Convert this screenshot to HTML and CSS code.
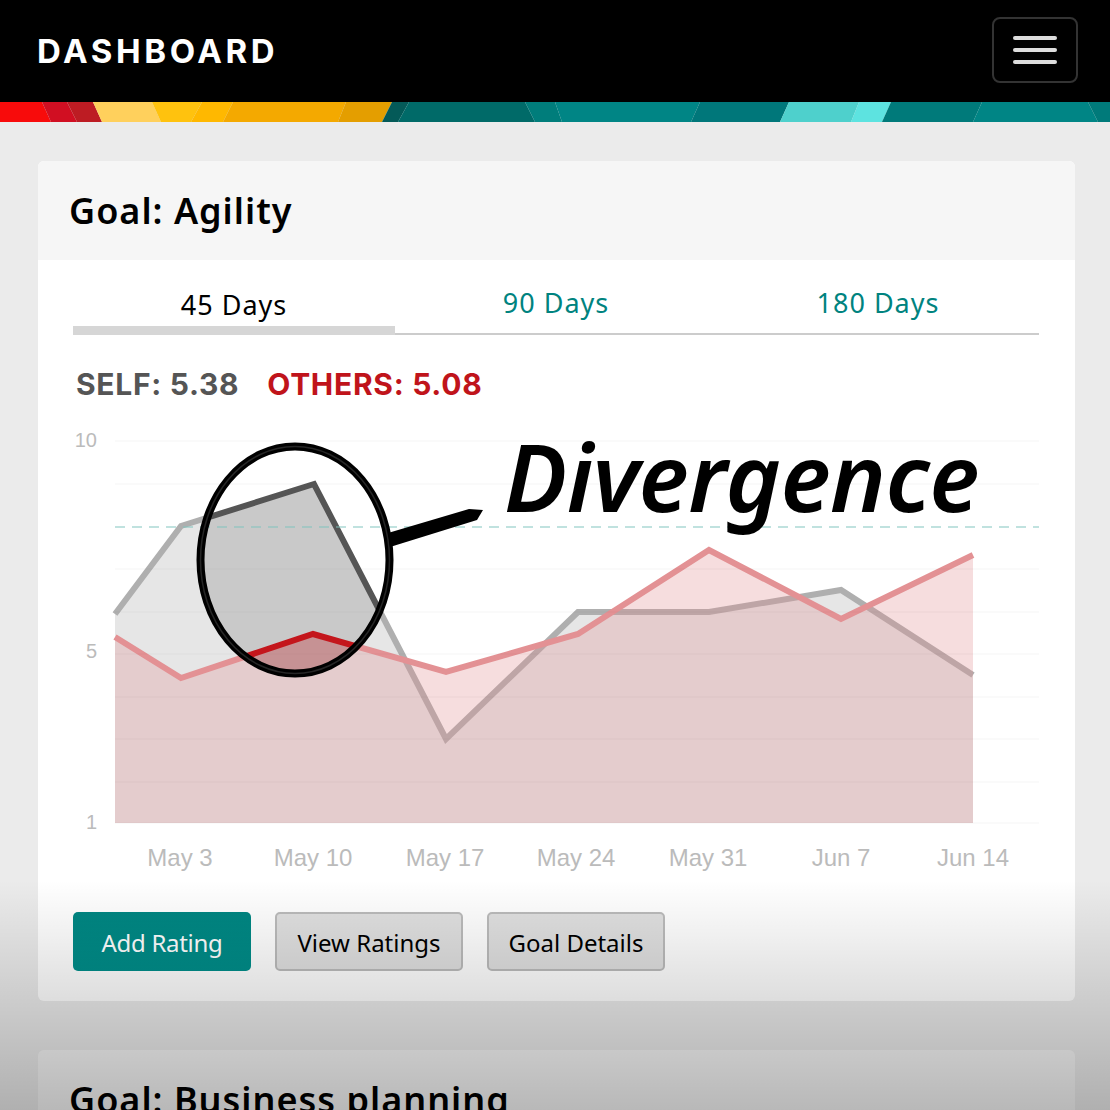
FILE: index.html
```html
<!DOCTYPE html>
<html lang="en">
  <head>
    <title>Dashboard</title>
    <link rel="stylesheet" href="styles.css">
  </head>
  <body>
    <nav class="topbar">
      <a class="brand">DASHBOARD</a>
      <button class="menu-toggle" aria-label="Menu">
        <span></span>
        <span></span>
        <span></span>
      </button>
    </nav>

    <svg class="stripe" viewBox="0 0 1110 20" preserveAspectRatio="none" aria-hidden="true">
      <polygon fill="#f80b0b" points="0,0 42,0 51,20 0,20"/>
      <polygon fill="#d10f22" points="42,0 67,0 77,20 51,20"/>
      <polygon fill="#bd1c23" points="67,0 93,0 102,20 77,20"/>
      <polygon fill="#ffd05c" points="93,0 152,0 161,20 102,20"/>
      <polygon fill="#ffc20e" points="152,0 202,0 191,20 161,20"/>
      <polygon fill="#ffb800" points="202,0 233,0 223,20 191,20"/>
      <polygon fill="#f4a900" points="233,0 346,0 338,20 223,20"/>
      <polygon fill="#e49e00" points="346,0 392,0 382,20 338,20"/>
      <polygon fill="#045a58" points="392,0 409,0 398,20 382,20"/>
      <polygon fill="#006a68" points="409,0 525,0 535,20 398,20"/>
      <polygon fill="#007d7b" points="525,0 555,0 562,20 535,20"/>
      <polygon fill="#008585" points="555,0 700,0 691,20 562,20"/>
      <polygon fill="#00777a" points="700,0 789,0 780,20 691,20"/>
      <polygon fill="#4ed0cc" points="789,0 859,0 851,20 780,20"/>
      <polygon fill="#5de3e0" points="859,0 891,0 882,20 851,20"/>
      <polygon fill="#007a7a" points="891,0 982,0 973,20 882,20"/>
      <polygon fill="#008585" points="982,0 1088,0 1098,20 973,20"/>
      <polygon fill="#007a7a" points="1088,0 1110,0 1110,20 1098,20"/>
    </svg>

    <main class="goals">
      <section class="card">
        <h2 class="card-title">Goal: Agility</h2>
        <div class="card-body">
          <ul class="tabs">
            <li class="tab active">45 Days</li>
            <li class="tab">90 Days</li>
            <li class="tab">180 Days</li>
          </ul>

          <p class="scores">
            <span class="score-self">SELF: 5.38</span>
            <span class="score-others">OTHERS: 5.08</span>
          </p>

          <!-- viewBox starts at the chart's corner so points read as page coords -->
          <svg class="chart" viewBox="73 420 966 460">
            <defs>
              <clipPath id="lens">
                <ellipse cx="295" cy="560" rx="94" ry="113"/>
              </clipPath>
              <mask id="outside-lens" maskUnits="userSpaceOnUse" x="73" y="420" width="966" height="460">
                <rect x="73" y="420" width="966" height="460" fill="#fff"/>
                <ellipse cx="295" cy="560" rx="94" ry="113" fill="#000"/>
              </mask>
              <g id="plot">
                <polygon class="area-self" points="115,614 181,526 314,484 446,739 578,612 709,612 841,590 973,675 973,823 115,823"/>
                <polyline class="line-self" points="115,614 181,526 314,484 446,739 578,612 709,612 841,590 973,675"/>
                <polygon class="area-others" points="115,637 181,678 313,634 446,672 578,634 709,550 841,619 973,555 973,823 115,823"/>
                <polyline class="line-others" points="115,637 181,678 313,634 446,672 578,634 709,550 841,619 973,555"/>
              </g>
            </defs>

            <g class="grid">
              <line x1="115" x2="1039" y1="441" y2="441"/>
              <line x1="115" x2="1039" y1="484" y2="484"/>
              <line x1="115" x2="1039" y1="569" y2="569"/>
              <line x1="115" x2="1039" y1="612" y2="612"/>
              <line x1="115" x2="1039" y1="654" y2="654"/>
              <line x1="115" x2="1039" y1="697" y2="697"/>
              <line x1="115" x2="1039" y1="739" y2="739"/>
              <line x1="115" x2="1039" y1="782" y2="782"/>
              <line x1="115" x2="1039" y1="823" y2="823"/>
            </g>

            <g mask="url(#outside-lens)">
              <use href="#plot" class="plot-faded"/>
            </g>
            <use href="#plot" clip-path="url(#lens)"/>
            <line class="target" x1="115" x2="1039" y1="527" y2="527"/>

            <text class="y-label" x="97" y="447">10</text>
            <text class="y-label" x="97" y="658">5</text>
            <text class="y-label" x="97" y="829">1</text>

            <text class="x-label" x="180" y="866">May 3</text>
            <text class="x-label" x="313" y="866">May 10</text>
            <text class="x-label" x="445" y="866">May 17</text>
            <text class="x-label" x="576" y="866">May 24</text>
            <text class="x-label" x="708" y="866">May 31</text>
            <text class="x-label" x="841" y="866">Jun 7</text>
            <text class="x-label" x="973" y="866">Jun 14</text>

            <ellipse class="ring" cx="295" cy="560" rx="94.5" ry="113.5"/>
            <ellipse class="ring-inner" cx="295" cy="560" rx="94.5" ry="113.5"/>
            <polygon class="pointer" points="388,533 469,509 483,510 477,520 390,547"/>
            <text class="callout" x="504" y="512">Divergence</text>
          </svg>

          <div class="actions">
            <button class="btn btn-primary">Add Rating</button>
            <button class="btn">View Ratings</button>
            <button class="btn">Goal Details</button>
          </div>
        </div>
      </section>

      <section class="card">
        <h2 class="card-title">Goal: Business planning</h2>
      </section>
    </main>

    <div class="fade"></div>
  </body>
</html>
```

FILE: styles.css
```css
:root {
  --teal: #00837f;
  --page-bg: #ebebeb;
}

html, body {
  height: 100vh;
  overflow: hidden;
}

body {
  margin: 0;
  background: var(--page-bg);
  font-family: "Noto Sans", sans-serif;
  color: #000;
}

.topbar {
  height: 102px;
  box-sizing: border-box;
  padding: 0 32px 2px 37px;
  background: #000;
  display: flex;
  justify-content: space-between;
  align-items: center;
}

.brand {
  margin-top: 2px;
  font-family: Inter, sans-serif;
  font-weight: 700;
  font-size: 33px;
  letter-spacing: 3.6px;
  color: #fff;
}

.menu-toggle {
  width: 86px;
  height: 66px;
  box-sizing: border-box;
  background: none;
  border: 2px solid #333;
  border-radius: 8px;
  display: flex;
  flex-direction: column;
  justify-content: center;
  align-items: center;
  gap: 8px;
  padding: 0;
}
  .menu-toggle span {
    width: 44px;
    height: 4px;
    border-radius: 2px;
    background: #ddd;
  }

.stripe {
  display: block;
  width: 100%;
  height: 20px;
}

.goals {
  padding: 39px 35px 0 38px;
  display: flex;
  flex-direction: column;
  gap: 49px;
}

.card {
  background: #fff;
  border-radius: 6px;
  overflow: hidden;
  flex: none;
}

.card-title {
  margin: 0;
  height: 99px;
  box-sizing: border-box;
  padding: 26px 31px 0;
  background: #f6f6f6;
  font-size: 36px;
  line-height: 48px;
  font-weight: 600;
  letter-spacing: 1px;
}

.card-body {
  padding: 0 36px 30px 35px;
}

.tabs {
  list-style: none;
  margin: 0;
  padding: 0;
  display: grid;
  grid-template-columns: repeat(3, 1fr);
  height: 75px;
  box-sizing: border-box;
  border-bottom: 2px solid #ccc;
}
  .tab {
    padding-top: 23px;
    text-align: center;
    font-size: 27px;
    line-height: 40px;
    letter-spacing: 1px;
    color: var(--teal);
  }
  .tab.active {
    color: #000;
    height: 75px;
    box-sizing: border-box;
    padding-top: 25px;
    border-bottom: 9px solid #d6d6d6;
  }

.scores {
  margin: 0;
  padding: 29px 3px 0;
  height: 85px;
  box-sizing: border-box;
  font-family: Inter, sans-serif;
  font-weight: 700;
  font-size: 30px;
  line-height: 40px;
  letter-spacing: .7px;
  display: flex;
  gap: 28px;
}
  .score-self { color: #555; }
  .score-others { color: #c0141b; }

.chart {
  display: block;
  width: 966px;
  height: 460px;
  overflow: visible;
  font-family: "Liberation Sans", sans-serif;
}
  .grid line {
    stroke: #f8f8f8;
    stroke-width: 1.5;
  }
  .target {
    stroke: #7fc4bf;
    stroke-opacity: .65;
    stroke-width: 1.5;
    stroke-dasharray: 10 7;
  }
  .area-self { fill: #7d7d7d; fill-opacity: .41; }
  .area-others { fill: #c0141b; fill-opacity: .3; }
  .line-self, .line-others {
    fill: none;
    stroke-width: 6;
    stroke-linejoin: miter;
  }
  .line-self { stroke: #555; }
  .line-others { stroke: #c4161c; }
  .plot-faded { opacity: .47; }
  .y-label {
    fill: #bbb;
    font-size: 20px;
    text-anchor: end;
  }
  .x-label {
    fill: #bbb;
    font-size: 24px;
    text-anchor: middle;
  }
  .ring {
    fill: none;
    stroke: #000;
    stroke-width: 8;
  }
  .ring-inner {
    fill: none;
    stroke: #262626;
    stroke-width: 1.5;
  }
  .pointer { fill: #000; }
  .callout {
    font-family: "Noto Sans", sans-serif;
    font-style: italic;
    font-weight: 600;
    font-size: 94px;
    letter-spacing: -.6px;
    fill: #000;
  }

.actions {
  margin-top: 32px;
  display: flex;
  gap: 24px;
}

.btn {
  width: 188px;
  height: 59px;
  box-sizing: border-box;
  padding: 1px 0 0;
  font-family: "Noto Sans", sans-serif;
  font-size: 24px;
  color: #000;
  background: #e0e0e0;
  border: 2px solid #bbb;
  border-radius: 5px;
}
  .btn + .btn + .btn { width: 178px; }
  .btn-primary {
    width: 178px;
    background: linear-gradient(#008682, #008e8a);
    border: 0;
    color: #fff;
    letter-spacing: -.3px;
  }

/* bottom of the screen darkens over everything */
.fade {
  position: absolute;
  left: 0;
  right: 0;
  top: 880px;
  height: 230px;
  background: linear-gradient(rgba(0, 0, 0, 0), rgba(0, 0, 0, .25));
  pointer-events: none;
}
```
